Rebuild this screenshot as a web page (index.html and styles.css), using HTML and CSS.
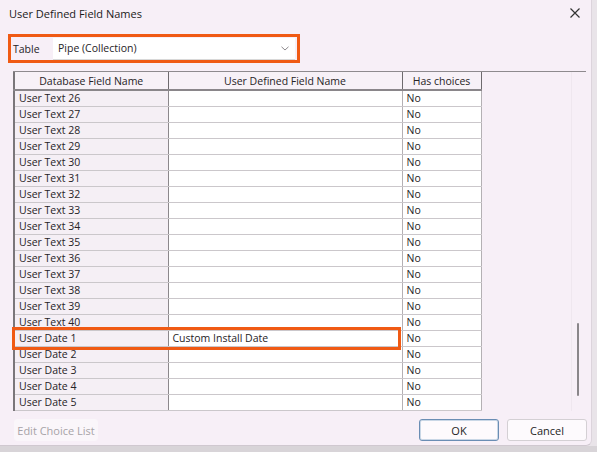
FILE: index.html
```html
<!DOCTYPE html>
<html>
<head>
<meta charset="utf-8">
<link rel="stylesheet" href="styles.css">
</head>
<body>
<div class="dialog">
  <div class="titlebar">
    <span class="title">User Defined Field Names</span>
    <svg class="close" width="12" height="12" viewBox="0 0 12 12"><path d="M1.5 1.5 L10.5 10.5 M10.5 1.5 L1.5 10.5" stroke="#333" stroke-width="1.2" fill="none"/></svg>
  </div>
  <div class="picker">
    <span class="picker-label">Table</span>
    <div class="combo">
      <span>Pipe (Collection)</span>
      <svg class="chev" width="8" height="5" viewBox="0 0 8 5"><path d="M0.5 0.8 L4 4 L7.5 0.8" stroke="#8c888c" stroke-width="1" fill="none"/></svg>
    </div>
  </div>
  <div class="grid-wrap">
    <table class="grid">
      <thead>
        <tr><th class="c1">Database Field Name</th><th class="c2">User Defined Field Name</th><th class="c3">Has choices</th></tr>
      </thead>
      <tbody>
        <tr><td class="c1">User Text 26</td><td class="c2"></td><td class="c3">No</td></tr>
        <tr><td class="c1">User Text 27</td><td class="c2"></td><td class="c3">No</td></tr>
        <tr><td class="c1">User Text 28</td><td class="c2"></td><td class="c3">No</td></tr>
        <tr><td class="c1">User Text 29</td><td class="c2"></td><td class="c3">No</td></tr>
        <tr><td class="c1">User Text 30</td><td class="c2"></td><td class="c3">No</td></tr>
        <tr><td class="c1">User Text 31</td><td class="c2"></td><td class="c3">No</td></tr>
        <tr><td class="c1">User Text 32</td><td class="c2"></td><td class="c3">No</td></tr>
        <tr><td class="c1">User Text 33</td><td class="c2"></td><td class="c3">No</td></tr>
        <tr><td class="c1">User Text 34</td><td class="c2"></td><td class="c3">No</td></tr>
        <tr><td class="c1">User Text 35</td><td class="c2"></td><td class="c3">No</td></tr>
        <tr><td class="c1">User Text 36</td><td class="c2"></td><td class="c3">No</td></tr>
        <tr><td class="c1">User Text 37</td><td class="c2"></td><td class="c3">No</td></tr>
        <tr><td class="c1">User Text 38</td><td class="c2"></td><td class="c3">No</td></tr>
        <tr><td class="c1">User Text 39</td><td class="c2"></td><td class="c3">No</td></tr>
        <tr><td class="c1">User Text 40</td><td class="c2"></td><td class="c3">No</td></tr>
        <tr><td class="c1">User Date 1</td><td class="c2">Custom Install Date</td><td class="c3">No</td></tr>
        <tr><td class="c1">User Date 2</td><td class="c2"></td><td class="c3">No</td></tr>
        <tr><td class="c1">User Date 3</td><td class="c2"></td><td class="c3">No</td></tr>
        <tr><td class="c1">User Date 4</td><td class="c2"></td><td class="c3">No</td></tr>
        <tr><td class="c1">User Date 5</td><td class="c2"></td><td class="c3">No</td></tr>
      </tbody>
    </table>
    <div class="filler"></div>
    <div class="vscroll"><div class="thumb"></div></div>
    <div class="row-mark"></div>
  </div>
  <div class="footer">
    <button class="btn disabled">Edit Choice List</button>
    <div class="spacer"></div>
    <button class="btn default">OK</button>
    <button class="btn">Cancel</button>
  </div>
</div>
<div class="taskbar"></div>
</body>
</html>
```

FILE: styles.css
```css
html, body {
  margin: 0;
  padding: 0;
  width: 597px;
  height: 452px;
  overflow: hidden;
  background: #e9e4e9;
  font-family: "Open Sans", "Noto Sans", sans-serif;
  font-size: 10.5px;
  color: #262326;
}

.dialog {
  width: 592px;
  height: 446px;
  background: #f7eff7;
  border-right: 1px solid #dcd4dc;
  border-bottom: 1px solid #d0c8d0;
  border-radius: 0 0 6px 0;
  display: flex;
  flex-direction: column;
  box-sizing: border-box;
}

.titlebar {
  height: 26px;
  display: flex;
  align-items: center;
  padding: 0 8px 0 9px;
  font-size: 11px;
}
.title { flex: 1; color: #1a1a1a; }
.close { margin-right: 2px; }

.picker {
  margin: 8px 0 0 8px;
  width: 292px;
  height: 29px;
  box-sizing: border-box;
  border: 3px solid #f05a14;
  display: flex;
  align-items: center;
  padding-left: 2px;
}
.picker-label { width: 40px; }
.combo {
  flex: 1;
  height: 22px;
  margin-right: 2px;
  background: #fff;
  display: flex;
  align-items: center;
  padding: 0 6px 0 5px;
  border-bottom: 1px solid #d8d8d8;
  box-sizing: border-box;
}
.combo span { flex: 1; }

.grid-wrap {
  position: relative;
  margin: 8px 0 0 13px;
  width: 573px;
  height: 340px;
  display: flex;
  border-top: 1px solid #8e8a8e;
  box-sizing: border-box;
}

.grid {
  border-collapse: collapse;
  table-layout: fixed;
  width: 467px;
  border-left: 2px solid #7a767a;
}
.grid th, .grid td {
  padding: 0 0 0 4px;
  white-space: nowrap;
  overflow: hidden;
  font-weight: normal;
  box-sizing: border-box;
}
.grid th {
  height: 18px;
  text-align: center;
  padding: 0;
  background: #f7f1f7;
  border-right: 1px solid #6e6a6e;
  border-bottom: 2px solid #8a868a;
}
.grid td {
  height: 16px;
  line-height: 15px;
  border-bottom: 1px solid #cbc7cb;
  border-right: 1px solid #b4b0b4;
}
.grid .c1 { width: 154px; }
.grid .c2 { width: 234px; }
.grid .c3 { width: 79px; }
.grid td.c1 { background: #f5eff5; border-right: 1px solid #8c888c; }
.grid td.c2, .grid td.c3 { background: #fff; }

.filler { flex: 1; }
.vscroll {
  width: 14px;
  border-left: 1px solid #efe7ef;
  position: relative;
}
.thumb {
  position: absolute;
  left: 5px;
  top: 251px;
  width: 2px;
  height: 73px;
  background: #8a868a;
  border-radius: 1px;
}

.row-mark {
  position: absolute;
  left: -1px;
  top: 255px;
  width: 389px;
  height: 23px;
  border: 3px solid #f05a14;
  box-sizing: border-box;
}

.footer {
  display: flex;
  align-items: center;
  margin-top: 8px;
  padding: 0 4px 0 14px;
  height: 22px;
}
.spacer { flex: 1; }
.btn {
  font-family: inherit;
  font-size: 11px;
  height: 22px;
  width: 80px;
  background: #fdfafd;
  border: 1px solid #d4d0d4;
  border-radius: 3px;
  color: #1e1e1e;
  padding: 0;
  margin-left: 8px;
}
.btn.default { border: 1px solid #6a8db4; box-shadow: inset 0 0 0 1px #c9d7e6; }
.btn.disabled {
  margin-left: 0;
  width: 84px;
  background: #faf6fa;
  border-color: #faf6fa;
  color: #a7a3a7;
}

.taskbar {
  height: 6px;
  background: #d8d4d8;
}
```
